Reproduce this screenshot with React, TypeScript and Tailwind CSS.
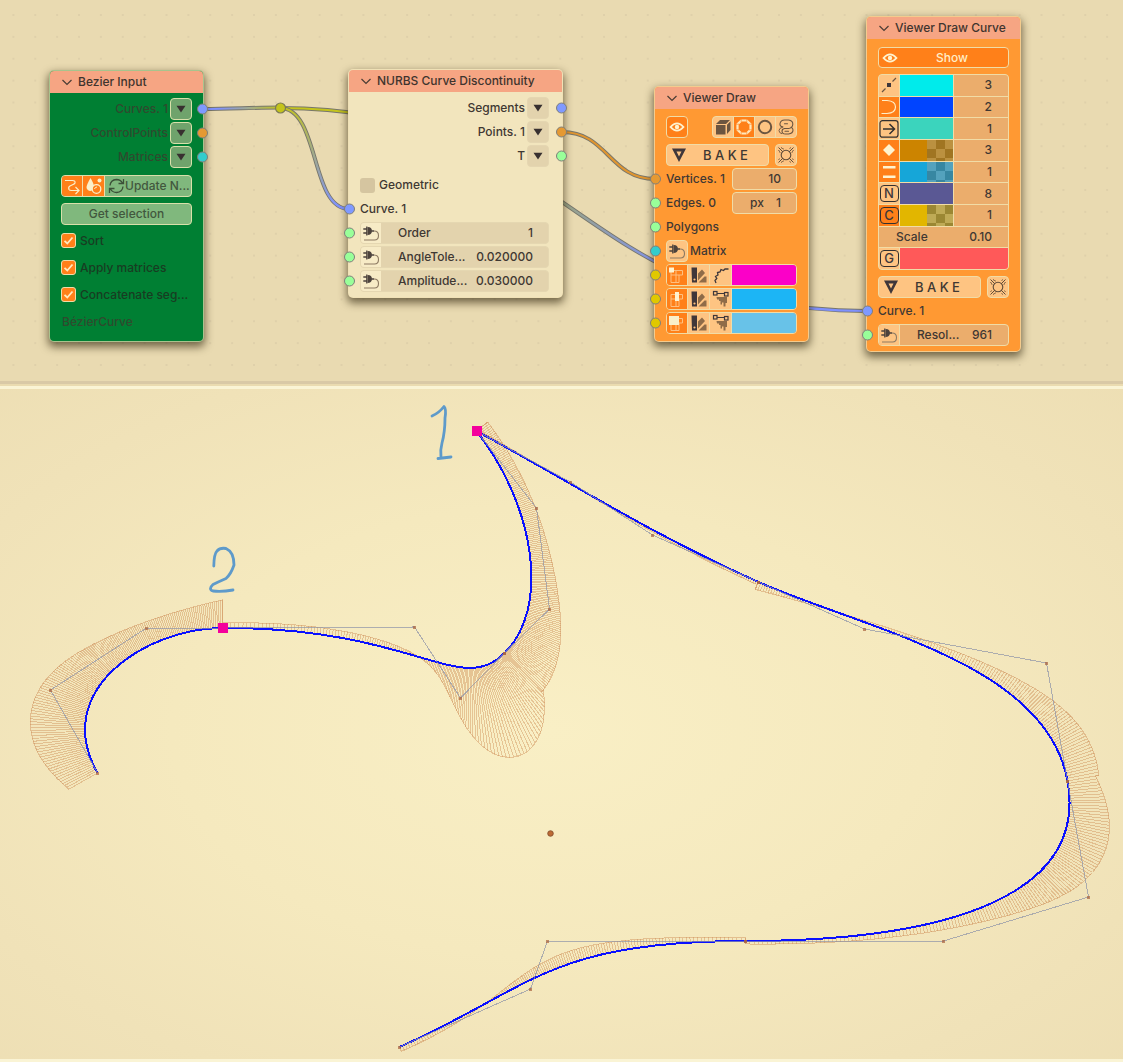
import React, { useId } from "react";

type Pt = [number, number];

/* ---------- curve viewport geometry ---------- */

const SEGMENTS: [Pt, Pt, Pt, Pt][] = [
  [[98, 773], [51, 690], [147, 628], [223, 628]],
  [[223, 628], [415, 627], [461, 698], [505, 653]],
  [[505, 653], [550, 609], [537, 508], [477, 431]],
  [[477, 431], [571, 482], [653, 535], [759, 582]],
  [[759, 582], [865, 629], [1047, 663], [1068, 781]],
  [[1068, 781], [1089, 897], [944, 941], [746, 941]],
  [[746, 941], [548, 941], [531, 989], [400, 1047]],
];
const COMB_SCALE = 3930;
const STEPS = 137;

function combFor([a, b, c, d]: [Pt, Pt, Pt, Pt]) {
  const teeth: string[] = [];
  const tips: string[] = [];
  for (let i = 0; i <= STEPS; i++) {
    const t = i / STEPS;
    const u = 1 - t;
    const at = (k: 0 | 1) => u * u * u * a[k] + 3 * u * u * t * b[k] + 3 * u * t * t * c[k] + t * t * t * d[k];
    const d1 = (k: 0 | 1) => 3 * (u * u * (b[k] - a[k]) + 2 * u * t * (c[k] - b[k]) + t * t * (d[k] - c[k]));
    const d2 = (k: 0 | 1) => 6 * (u * (c[k] - 2 * b[k] + a[k]) + t * (d[k] - 2 * c[k] + b[k]));
    const len = Math.hypot(d1(0), d1(1));
    const curvature = (d1(0) * d2(1) - d1(1) * d2(0)) / (len * len * len);
    const x = at(0);
    const y = at(1);
    const tx = x + (d1(1) / len) * curvature * COMB_SCALE;
    const ty = y - (d1(0) / len) * curvature * COMB_SCALE;
    teeth.push(`M${x.toFixed(1)} ${y.toFixed(1)}L${tx.toFixed(1)} ${ty.toFixed(1)}`);
    tips.push(`${tx.toFixed(1)} ${ty.toFixed(1)}`);
  }
  return { teeth: teeth.join(""), tips };
}

const COMBS = SEGMENTS.map(combFor);
const TEETH = COMBS.map((c) => c.teeth).join("");
const ENVELOPE = "M" + COMBS.flatMap((c) => c.tips).join("L");
const CURVE = SEGMENTS.map(([a, b, c, d]) => `M${a}C${b} ${c} ${d}`).join("");
const POLYGON = "M" + SEGMENTS.flat().join("L");

function Viewport() {
  return (
    <section className="border-t-3 border-b-3 border-[#faf4d5] bg-[radial-gradient(ellipse_80%_80%_at_49%_51%,#f9efc5_0%,#f5e9be_42%,#f0e2b8_72%,#ecddb2_100%)]">
      <svg viewBox="0 389 1123 670" className="block w-full" role="img" aria-label="Curve with curvature comb">
        <g fill="none" shapeRendering="crispEdges" transform="translate(-0.5 0)">
          <path d={TEETH} stroke="#c98048" strokeOpacity="0.38" />
          <path d={ENVELOPE} stroke="#c98048" strokeOpacity="0.4" />
          <path d={CURVE} stroke="#0a10ff" strokeWidth="2" />
          <path d={POLYGON} stroke="#8d93a8" strokeOpacity="0.7" />
        </g>
        <g fill="#a9633f" fillOpacity="0.7" shapeRendering="crispEdges" transform="translate(-1 0)">
          {SEGMENTS.flat().map(([x, y], i) => (
            <rect key={i} x={x - 1} y={y - 1} width="3" height="3" />
          ))}
        </g>
        <g fill="#f4009c">
          <rect x="472" y="426" width="10" height="10" />
          <rect x="218" y="623" width="10" height="10" />
        </g>
        <circle cx="550.5" cy="833.5" r="2.8" fill="#bd6b35" stroke="#7f4a2b" strokeWidth="0.8" />
        <g fill="none" stroke="#5e9aca" strokeWidth="2.8" strokeLinecap="round" strokeLinejoin="round">
          <path d="M432 416 Q439 413 444 406.5 Q446.500 409 445 418 Q445 432 442 443 Q440 450 441 458 M438 458.500 L451 457" />
          <path d="M213.800 566 Q214 554 217 551 Q220 547.500 226 548.500 Q234 552 234 565 Q231 574 226 578.500 Q218 582 213 584.500 Q208 589 213 591 Q222 592 233 590" />
        </g>
      </svg>
    </section>
  );
}

/* ---------- icons ---------- */

type SvgProps = { children: React.ReactNode; className?: string };
const Ico = ({ children, className = "" }: SvgProps) => (
  <svg width="20" height="20" viewBox="0 0 20 20" fill="none" aria-hidden="true" className={`shrink-0 ${className}`}>
    {children}
  </svg>
);
const Chevron = () => (
  <svg width="12" height="12" viewBox="0 0 12 12" fill="none" stroke="#4a3c34" strokeWidth="1.2" aria-hidden="true">
    <path d="M1.500 4 L6 8.500 L10.500 4" />
  </svg>
);
const DownTri = () => (
  <svg width="10" height="8" viewBox="0 0 10 8" aria-hidden="true">
    <path d="M0.500 0.800 H9.500 L5 7.500 Z" fill="#383030" />
  </svg>
);
const PathIcon = () => (
  <Ico>
    <path d="M3 4.500 H10.500 Q13.500 4.500 13 7 Q12.700 8 10 9 L8 10 Q6 11 7 13.500 Q7.500 14.500 9.500 14.500 H17 M13.500 11 L17 14.500 L13.500 18" stroke="#fbefc9" strokeWidth="1.200" />
  </Ico>
);
const DropIcon = () => (
  <Ico>
    <path d="M6.500 2 Q10 8 10 10.500 Q9 15 6 15 Q2.500 14 2.500 11 Q3 8 6.500 2Z" fill="#fbefc9" />
    <circle cx="15.500" cy="4.500" r="2" fill="#fbefc9" />
    <circle cx="12.500" cy="13" r="4.300" fill="#ff8019" stroke="#fbefc9" strokeWidth="1.300" />
    <path d="M10.500 13 Q11 11 13 11" stroke="#fbefc9" />
  </Ico>
);
const RefreshIcon = () => (
  <svg width="17" height="18" viewBox="0 0 17 18" fill="none" stroke="#3c5038" strokeWidth="1.300" aria-hidden="true" className="shrink-0">
    <path d="M2 8.500 Q2.500 3 8.500 2.500 Q12.500 2.500 14.500 6 M15.500 2 V6.500 H10.500 M15 9.500 Q14.500 15 8.500 15.500 Q4.500 15.500 2.500 12 M1.500 16 V11.500 H6.500" />
  </svg>
);
const PlugIcon = () => (
  <Ico>
    <path d="M6.500 4 Q10.800 3.800 11 8 Q10.800 12 6.500 12 Z" fill="#4c423c" />
    <path d="M5.800 3.500 V12.500 M2.300 6 H6 M2.300 10 H6 M10.500 8 H13" stroke="#4c423c" strokeWidth="1.300" />
    <path d="M13 8 Q17.500 8 17.500 12.500 Q17.500 17 13.500 17 H3" stroke="#8d7a62" strokeWidth="1.100" />
  </Ico>
);
const EyeIcon = () => (
  <Ico>
    <path d="M3.500 10 Q10 2.800 16.500 10 Q10 17.200 3.500 10Z" stroke="#fff3d0" strokeWidth="1.800" />
    <circle cx="10" cy="10" r="2.200" fill="#fff3d0" />
  </Ico>
);
const CubeIcon = () => (
  <Ico>
    <path d="M3 7 L7 3 H17 L13 7Z M3 8 H12.500 V17.500 H3Z M14 7.800 L17.500 4.200 V13 L14 17Z" fill="#6b5540" />
  </Ico>
);
const DashedRing = () => (
  <Ico>
    <path d="M7.300 3.500 H12.700 L16.500 7.300 V12.700 L12.700 16.500 H7.300 L3.500 12.700 V7.300Z" stroke="#ffe9bd" strokeWidth="2.200" />
    <path d="M7.200 2 V5 M12.800 2 V5 M7.200 15 V18 M12.800 15 V18 M2 7.200 H5 M2 12.800 H5 M15 7.200 H18 M15 12.800 H18" stroke="#ff8019" strokeWidth="0.600" />
  </Ico>
);
const RingIcon = () => (
  <Ico>
    <circle cx="10" cy="10" r="6.200" stroke="#6b5540" strokeWidth="2" />
  </Ico>
);
const SwirlIcon = () => (
  <Ico>
    <path d="M7 10 Q3.500 9.500 4 6.500 Q4.800 3 8.500 3 H12.500 Q17 3.500 16.800 7.200 Q16.500 11 12.500 11.500 H8.500 Q6 12 6 14.200 Q6.200 17 9.500 17 H12.500 Q17 16.500 17 13 Q17 11 15 10.300 M8.500 6.800 H11.500 M9 14.200 H12.500" stroke="#6b5540" strokeWidth="1.100" strokeLinecap="round" />
    <path d="M7 10 Q3 11 3 13.500 Q3 16 6 16.800" stroke="#6b5540" strokeWidth="0.900" />
  </Ico>
);
const BakeTri = () => (
  <svg width="16" height="16" viewBox="0 0 16 16" fill="none" aria-hidden="true" className="shrink-0">
    <path d="M1 1.500 H15 L8 15Z M5.500 4.500 H10.500 L8 9.500Z" fill="#40373a" fillRule="evenodd" />
  </svg>
);
const LampIcon = () => (
  <Ico>
    <circle cx="10" cy="10" r="4.800" stroke="#5f4b38" strokeWidth="1.100" />
    <path d="M2.500 2.500 L6.800 6.800 M17.500 2.500 L13.200 6.800 M2.500 17.500 L6.800 13.200 M17.500 17.500 L13.200 13.200" stroke="#5f4b38" strokeWidth="1" />
    <path d="M5 2.500 Q10 6.500 15 2.500 M5 17.500 Q10 13.500 15 17.500 M2.500 5 Q6.500 10 2.500 15 M17.500 5 Q13.500 10 17.500 15" stroke="#5f4b38" strokeWidth="0.900" strokeDasharray="3 6.200" />
  </Ico>
);
const GridFrame = ({ children }: SvgProps) => (
  <Ico>
    <path d="M4 5.500 H15.500 V10 H4Z M4 10 V17.500 H12 V10 M9 5.500 V17.500" stroke="#ffc080" strokeWidth="1" />
    {children}
  </Ico>
);
const VertIcon = () => (
  <GridFrame>
    <rect x="2" y="2.500" width="5" height="5" fill="#fff3d0" />
  </GridFrame>
);
const EdgeIcon = () => (
  <GridFrame>
    <rect x="8" y="3" width="4" height="9" fill="#fff3d0" />
  </GridFrame>
);
const FaceIcon = () => (
  <GridFrame>
    <rect x="2" y="3" width="10" height="9" fill="#f9efcb" />
  </GridFrame>
);
const SwatchIcon = () => (
  <Ico>
    <path d="M2.500 2.500 H8 V17.500 H3 Z" fill="#40373a" />
    <circle cx="5.500" cy="14.500" r="1.100" fill="#ffc280" />
    <path d="M9 8.500 L13 4.500 L16 8 L9 15.500Z M9.500 17.500 L15.500 11.500 H17.500 V17.500Z" fill="#8f6c48" />
  </Ico>
);
const ScribbleIcon = () => (
  <Ico>
    <path d="M5 18 L4 15.500 L5.800 13.500 L4.500 11.500 L7 10 L6.500 7.500 L9 7 L10 4.500 L12.500 5.500 L14 4 L17.500 4" stroke="#40373a" strokeWidth="1.300" />
  </Ico>
);
const VertexPaintIcon = () => (
  <Ico>
    <path d="M5.500 8 H16 V14 H14.500 V17.500 H12.500 V13.500 H11 V15.500 H9.500 V12 H8 V10.500 H6Z" fill="#8f6c48" />
    <path d="M6 4.500 H14" stroke="#40373a" strokeWidth="1.200" />
    <rect x="2.500" y="2.500" width="3.500" height="3.500" stroke="#40373a" strokeWidth="1.200" />
    <rect x="13.500" y="3.500" width="3.500" height="3.500" stroke="#40373a" strokeWidth="1.200" />
  </Ico>
);
const PointLineIcon = () => (
  <Ico>
    <path d="M3 17 L6.500 13.500 M13.500 6.500 L17 3" stroke="#6b5540" strokeWidth="1.200" />
    <rect x="8" y="8" width="4" height="4" fill="#40373a" />
  </Ico>
);
const ArcIcon = () => (
  <Ico>
    <path d="M3 3.500 H8 Q16.500 4 16.500 10 Q16.500 16 8 16.500 H2.500" stroke="#ffeec8" strokeWidth="1.200" />
  </Ico>
);
const ArrowBoxIcon = () => (
  <Ico>
    <rect x="1" y="1.700" width="18" height="16.500" rx="2.500" stroke="#33302f" strokeWidth="1.200" />
    <path d="M4 10 H15.500 M10.500 5 L15.500 10 L10.500 15" stroke="#33302f" strokeWidth="1.500" />
  </Ico>
);
const DiamondIcon = () => (
  <Ico>
    <path d="M10 4 L16 10 L10 16 L4 10Z" fill="#fff3d0" />
  </Ico>
);
const BarsIcon = () => (
  <Ico>
    <path d="M4 5.200 H16.500 M4 14.800 H16.500" stroke="#fff3d0" strokeWidth="2.600" />
  </Ico>
);
const Letter = ({ ch }: { ch: string }) => (
  <span className="flex h-[17px] w-[19px] items-center justify-center rounded-sm border border-[#33302f] text-[13px] leading-none text-[#40373a]">{ch}</span>
);

/* ---------- node building blocks ---------- */

const SOCKET_SIDE = {
  left: "-left-4",
  right: "-right-4",
  outer: "-right-[18px]",
};

function Socket({ side, color }: { side: keyof typeof SOCKET_SIDE; color: string }) {
  return (
    <span
      className={`pointer-events-none absolute top-1/2 size-[11px] -translate-y-1/2 rounded-full border-[1.5px] border-[#7f7f7a] ${SOCKET_SIDE[side]} ${color}`}
    />
  );
}

type NodeProps = { title: string; place: string; body: string; children: React.ReactNode };

function Node({ title, place, body, children }: NodeProps) {
  return (
    <article
      className={`absolute rounded-[5px] border border-[#f0e0b4]/70 shadow-[0_4px_8px_1px_rgba(50,40,15,0.65)] ${place} ${body}`}
    >
      <header className="flex h-[22px] items-center rounded-t-[4px] bg-[#f6a583] pl-[11px]">
        <button type="button" aria-label={`Collapse ${title}`} className="flex w-[17px]">
          <Chevron />
        </button>
        <h2 className="whitespace-nowrap text-[#3f342e]">{title}</h2>
      </header>
      <div className="px-[11px]">{children}</div>
    </article>
  );
}

type OutProps = { label: string; color: string; green?: boolean };

function OutputRow({ label, color, green = false }: OutProps) {
  return (
    <div className="relative flex h-6 items-center justify-end gap-[2px]">
      <span className={green ? "text-[#2f4a2e]" : ""}>{label}</span>
      <button
        type="button"
        aria-label={`${label} options`}
        className={`flex size-[22px] items-center justify-center rounded-[4px] border ${
          green ? "border-[#d9e0aa] bg-[#6fa36c]" : "border-[#e5d6b1] bg-[#e3d3ad]"
        }`}
      >
        <DownTri />
      </button>
      <Socket side={green ? "right" : "outer"} color={color} />
    </div>
  );
}

function InputLabel({ label, color }: { label: string; color: string }) {
  return (
    <div className="relative flex h-6 items-center">
      <Socket side="left" color={color} />
      {label}
    </div>
  );
}

function Tick({ label, checked, green = false }: { label: string; checked: boolean; green?: boolean }) {
  return (
    <label className={`flex items-center gap-1 whitespace-nowrap ${green ? "h-[27px] text-[#183c22]" : "h-6"}`}>
      <span className="relative flex size-[15px] shrink-0">
        <input
          type="checkbox"
          defaultChecked={checked}
          className="peer size-[15px] appearance-none rounded-[3px] bg-[#d5c5a0] checked:border checked:border-[#f0dca8] checked:bg-[#ff8019]"
        />
        <svg viewBox="0 0 15 15" className="pointer-events-none absolute inset-0 hidden peer-checked:block" fill="none" aria-hidden="true">
          <path d="M3.500 7.800 L6.300 10.500 L11.500 4.500" stroke="#ffe9bd" strokeWidth="1.800" />
        </svg>
      </span>
      {label}
    </label>
  );
}

function FieldRow({ label, value }: { label: string; value: string }) {
  const id = useId();
  return (
    <div className="relative flex h-6 items-center">
      <Socket side="left" color="bg-[#99ff99]" />
      <div className="flex h-[22px] w-full items-center rounded-[4px] border border-[#e5d7b1] bg-[#e3d3ad]">
        <button type="button" aria-label={`Link ${label}`} className="flex h-full w-5 items-center rounded-l-[3px] bg-[#f7ebc6]">
          <PlugIcon />
        </button>
        <label htmlFor={id} className="ml-[17px] shrink-0">{label}</label>
        <input id={id} defaultValue={value} className="w-0 min-w-0 grow bg-transparent pr-[15px] text-right outline-none" />
      </div>
    </div>
  );
}

const LIGHT = "border border-[#f1dca6] bg-[#fec482]";

function BakeRow() {
  return (
    <div className="mt-[6px] flex h-[22px] justify-between">
      <button type="button" className={`flex w-[103px] items-center rounded-[4px] pl-1 ${LIGHT}`}>
        <BakeTri />
        <span className="grow pr-1 text-center text-[13px]">B A K E</span>
      </button>
      <button type="button" aria-label="Add material" className={`flex w-[22px] items-center justify-center rounded-[4px] ${LIGHT}`}>
        <LampIcon />
      </button>
    </div>
  );
}

function ValueBox({ label, prefix, value }: { label: string; prefix?: string; value: string }) {
  return (
    <label className="flex h-[22px] w-[65px] items-center rounded-[4px] border border-[#f1dca6] bg-[#ebad6c]">
      {prefix ? <span className="pl-[17px]">{prefix}</span> : null}
      <input aria-label={label} defaultValue={value} className="w-0 min-w-0 grow bg-transparent pr-[15px] text-right outline-none" />
    </label>
  );
}

type PaletteProps = { name: string; first: React.ReactNode; third: React.ReactNode; color: string };

function PaletteRow({ name, first, third, color }: PaletteProps) {
  return (
    <div className="relative flex h-6 items-center">
      <Socket side="left" color="bg-[#e0c800]" />
      <div className="flex h-[22px] w-full overflow-hidden rounded-[4px] border border-[#f1dca6]">
        <button type="button" aria-label={`Show ${name}`} className="flex w-5 items-center justify-center bg-[#ff8019]">{first}</button>
        <button type="button" aria-label={`${name} random colour`} className="flex w-[23px] items-center justify-center border-x border-[#f1dca6] bg-[#fec482]">
          <SwatchIcon />
        </button>
        <button type="button" aria-label={`${name} attribute`} className="flex w-[22px] items-center justify-center border-r border-[#f1dca6] bg-[#fec482]">{third}</button>
        <button type="button" aria-label={`${name} colour`} className={`grow ${color}`} />
      </div>
    </div>
  );
}

type CurveRowProps = { name: string; icon: React.ReactNode; on?: boolean; color: string; alpha?: string; value: string };

function CurveRow({ name, icon, on = false, color, alpha, value }: CurveRowProps) {
  return (
    <div className="flex min-h-0 gap-px">
      <button
        type="button"
        aria-label={`Toggle ${name}`}
        className={`flex w-5 shrink-0 items-center justify-center ${on ? "bg-[#ff8019]" : "bg-[#fec482]"}`}
      >
        {icon}
      </button>
      <button type="button" aria-label={`${name} colour`} className={`flex w-[53px] shrink-0 justify-end ${color}`}>
        {alpha ? <span className={`h-full w-[26px] bg-size-[18px_18px] ${alpha}`} /> : null}
      </button>
      <input aria-label={`${name} size`} defaultValue={value} className="w-0 min-w-0 grow bg-[#ebad6c] pr-4 text-right outline-none" />
    </div>
  );
}

/* ---------- links ---------- */

const LINKS: { d: string; stroke: string }[] = [
  { d: "M280 108 C573 108 573 311 866 311", stroke: "url(#yellow-blue-long)" },
  { d: "M280 108 C320 108 310 209 349 209", stroke: "url(#yellow-blue-short)" },
  { d: "M203 109 C230 109 253 107.500 280 107.500", stroke: "url(#blue-yellow)" },
  { d: "M562 132 C608 132 609 179 655 179", stroke: "#e0952f" },
];

function Links() {
  return (
    <svg className="pointer-events-none absolute inset-0 size-full" fill="none" aria-hidden="true">
      <defs>
        <pattern id="dots" x="12.400" y="14" width="21.875" height="21.875" patternUnits="userSpaceOnUse">
          <rect width="2" height="2" fill="#dfd0aa" />
        </pattern>
        <linearGradient id="yellow-blue-long" gradientUnits="userSpaceOnUse" x1="280" y1="0" x2="866" y2="0">
          <stop stopColor="#c4c41c" />
          <stop offset="0.15" stopColor="#c4c41c" />
          <stop offset="0.480" stopColor="#9ba583" />
          <stop offset="0.660" stopColor="#7f91f5" />
          <stop offset="1" stopColor="#7f91ff" />
        </linearGradient>
        <linearGradient id="yellow-blue-short" gradientUnits="userSpaceOnUse" x1="280" y1="108" x2="335" y2="209">
          <stop stopColor="#c4c41c" />
          <stop offset="1" stopColor="#7f91ff" />
        </linearGradient>
        <linearGradient id="blue-yellow" gradientUnits="userSpaceOnUse" x1="203" y1="0" x2="280" y2="0">
          <stop offset="0.2" stopColor="#7f91ff" />
          <stop offset="1" stopColor="#c4c41c" />
        </linearGradient>
      </defs>
      <rect width="100%" height="372" fill="url(#dots)" />
      {LINKS.map((l) => (
        <g key={l.d}>
          <path d={l.d} stroke="#77766c" strokeWidth="4" />
          <path d={l.d} stroke={l.stroke} strokeWidth="2.200" />
        </g>
      ))}
      <circle cx="280.500" cy="108" r="5" fill="#c4c41c" stroke="#7c7a55" strokeWidth="1.200" />
    </svg>
  );
}

/* ---------- page ---------- */

export default function App() {
  return (
    <main className="flex min-h-screen flex-col bg-[#ecddb3] font-['Inter',sans-serif] text-[12px] font-medium leading-4 text-[#3f3833]">
      <section className="relative h-[384px] overflow-hidden border-b-3 border-[#d9c9a6] bg-[#e9dab1]">
        <Links />

        <Node title="Bezier Input" place="left-[49px] top-[70px] w-[155px]" body="bg-[#007f33]">
          <div className="pt-1">
            <OutputRow green label="Curves. 1" color="bg-[#7f99ff]" />
            <OutputRow green label="ControlPoints" color="bg-[#e59933]" />
            <OutputRow green label="Matrices" color="bg-[#33cccc]" />
          </div>
          <div className="mt-[6px] flex h-[22px] overflow-hidden rounded-[4px] border border-[#d9e0aa] bg-[#80b87d]">
            <button type="button" aria-label="Curve output" className="flex w-[21px] items-center justify-center border-r border-[#f0dca8] bg-[#ff8019]">
              <PathIcon />
            </button>
            <button type="button" aria-label="Material output" className="flex w-[22px] items-center justify-center border-r border-[#f0dca8] bg-[#ff8019]">
              <DropIcon />
            </button>
            <button type="button" className="flex grow items-center whitespace-nowrap pl-[3px] text-[#42573d]">
              <RefreshIcon />
              Update N...
            </button>
          </div>
          <button type="button" className="mt-[6px] flex h-[22px] w-full items-center justify-center rounded-[4px] border border-[#d9e0aa] bg-[#80b87d] text-[#42573d]">
            Get selection
          </button>
          <div className="mt-[2px] pb-[6px]">
            <Tick green checked label="Sort" />
            <Tick green checked label="Apply matrices" />
            <Tick green checked label="Concatenate seg..." />
            <p className="flex h-[27px] items-center pl-px text-[#2f4a2e]">BézierCurve</p>
          </div>
        </Node>

        <Node title="NURBS Curve Discontinuity" place="left-[348px] top-[69px] w-[215px]" body="bg-[#f2e5bd]">
          <div className="py-1 pr-[2px]">
            <OutputRow label="Segments" color="bg-[#7f99ff]" />
            <OutputRow label="Points. 1" color="bg-[#e59933]" />
            <OutputRow label="T" color="bg-[#99ff99]" />
            <div className="pt-[5px]">
              <Tick checked={false} label="Geometric" />
            </div>
            <InputLabel label="Curve. 1" color="bg-[#7f99ff]" />
            <FieldRow label="Order" value="1" />
            <FieldRow label="AngleTole..." value="0.020000" />
            <FieldRow label="Amplitude..." value="0.030000" />
          </div>
        </Node>

        <Node title="Viewer Draw" place="left-[654px] top-[86px] w-[155px]" body="bg-[#ff9933]">
          <div className="mt-[7px] flex h-[22px] justify-between">
            <button type="button" aria-label="Show" className="flex w-[22px] items-center justify-center rounded-[4px] border border-[#f1dca6] bg-[#ff8019]">
              <EyeIcon />
            </button>
            <div className="flex w-[85px] overflow-hidden rounded-[4px] border border-[#f1dca6] bg-[#fec482]">
              <button type="button" aria-label="Solid" className="flex grow basis-0 items-center justify-center border-r border-[#f1dca6]"><CubeIcon /></button>
              <button type="button" aria-label="Dashed" className="flex grow basis-0 items-center justify-center border-r border-[#f1dca6] bg-[#ff8019]"><DashedRing /></button>
              <button type="button" aria-label="Ring" className="flex grow basis-0 items-center justify-center border-r border-[#f1dca6]"><RingIcon /></button>
              <button type="button" aria-label="Script" className="flex grow basis-0 items-center justify-center"><SwirlIcon /></button>
            </div>
          </div>
          <BakeRow />
          <div className="pb-[6px] pt-px">
            <div className="relative flex h-6 items-center justify-between">
              <Socket side="left" color="bg-[#e59933]" />
              <span>Vertices. 1</span>
              <ValueBox label="Vertex size" value="10" />
            </div>
            <div className="relative flex h-6 items-center justify-between">
              <Socket side="left" color="bg-[#99ff99]" />
              <span>Edges. 0</span>
              <ValueBox label="Edge width" prefix="px" value="1" />
            </div>
            <InputLabel label="Polygons" color="bg-[#99ff99]" />
            <div className="relative flex h-6 items-center gap-[2px]">
              <Socket side="left" color="bg-[#33cccc]" />
              <button type="button" aria-label="Link Matrix" className={`flex size-[22px] items-center justify-center rounded-[4px] ${LIGHT}`}>
                <PlugIcon />
              </button>
              <span>Matrix</span>
            </div>
            <PaletteRow name="Vertices" first={<VertIcon />} third={<ScribbleIcon />} color="bg-[#fb00c8]" />
            <PaletteRow name="Edges" first={<EdgeIcon />} third={<VertexPaintIcon />} color="bg-[#1cb5f5]" />
            <PaletteRow name="Polygons" first={<FaceIcon />} third={<VertexPaintIcon />} color="bg-[#68c2e8]" />
          </div>
        </Node>

        <Node title="Viewer Draw Curve" place="left-[866px] top-[16px] w-[155px]" body="bg-[#ff9933]">
          <button type="button" className="mt-2 flex h-[21px] w-full items-center rounded-[4px] border border-[#f1dca6] bg-[#ff8019] pl-px text-[#ffeec8]">
            <EyeIcon />
            <span className="grow pr-1 text-center">Show</span>
          </button>
          <div className="mt-[6px] grid h-[196px] grid-rows-9 gap-px overflow-hidden rounded-[4px] border border-[#f1dca6] bg-[#f1dca6]">
            <CurveRow name="Points" icon={<PointLineIcon />} color="bg-[#00ebeb]" value="3" />
            <CurveRow name="Line" icon={<ArcIcon />} on color="bg-[#0044ff]" value="2" />
            <CurveRow name="Direction" icon={<ArrowBoxIcon />} color="bg-[#3bd4bd]" value="1" />
            <CurveRow name="Control points" icon={<DiamondIcon />} on color="bg-[#cc8400]" alpha="bg-[conic-gradient(#a07522_25%,#bb9140_0_50%,#a07522_0_75%,#bb9140_0)]" value="3" />
            <CurveRow name="Control polygon" icon={<BarsIcon />} on color="bg-[#16a6d8]" alpha="bg-[conic-gradient(#3787a2_25%,#54a2bd_0_50%,#3787a2_0_75%,#54a2bd_0)]" value="1" />
            <CurveRow name="Nodes" icon={<Letter ch="N" />} color="bg-[#5a5894]" value="8" />
            <CurveRow name="Comb" icon={<Letter ch="C" />} on color="bg-[#e2b600]" alpha="bg-[conic-gradient(#bfaa56_25%,#9b8733_0_50%,#bfaa56_0_75%,#9b8733_0)]" value="1" />
            <label className="flex min-h-0 items-center bg-[#ebad6c] pl-[17px]">
              Scale
              <input defaultValue="0.10" className="w-0 min-w-0 grow bg-transparent pr-4 text-right outline-none" />
            </label>
            <div className="flex min-h-0 gap-px">
              <button type="button" aria-label="Toggle gradient" className="flex w-5 items-center justify-center bg-[#fec482]">
                <Letter ch="G" />
              </button>
              <button type="button" aria-label="Gradient colour" className="grow bg-[#ff5959]" />
            </div>
          </div>
          <BakeRow />
          <div className="pb-1 pt-px">
            <InputLabel label="Curve. 1" color="bg-[#7f99ff]" />
            <div className="relative flex h-6 items-center">
              <Socket side="left" color="bg-[#99ff99]" />
              <div className="flex h-[22px] w-full items-center overflow-hidden rounded-[4px] border border-[#f1dca6] bg-[#ebad6c]">
                <button type="button" aria-label="Link resolution" className="flex h-full w-[21px] items-center border-r border-[#f1dca6] bg-[#fec482]">
                  <PlugIcon />
                </button>
                <label htmlFor="resolution" className="pl-[17px]">Resol...</label>
                <input id="resolution" defaultValue="961" className="w-0 min-w-0 grow bg-transparent pr-4 text-right outline-none" />
              </div>
            </div>
          </div>
        </Node>
      </section>
      <div className="h-[2px] bg-[#eadbb0]" />
      <Viewport />
    </main>
  );
}
